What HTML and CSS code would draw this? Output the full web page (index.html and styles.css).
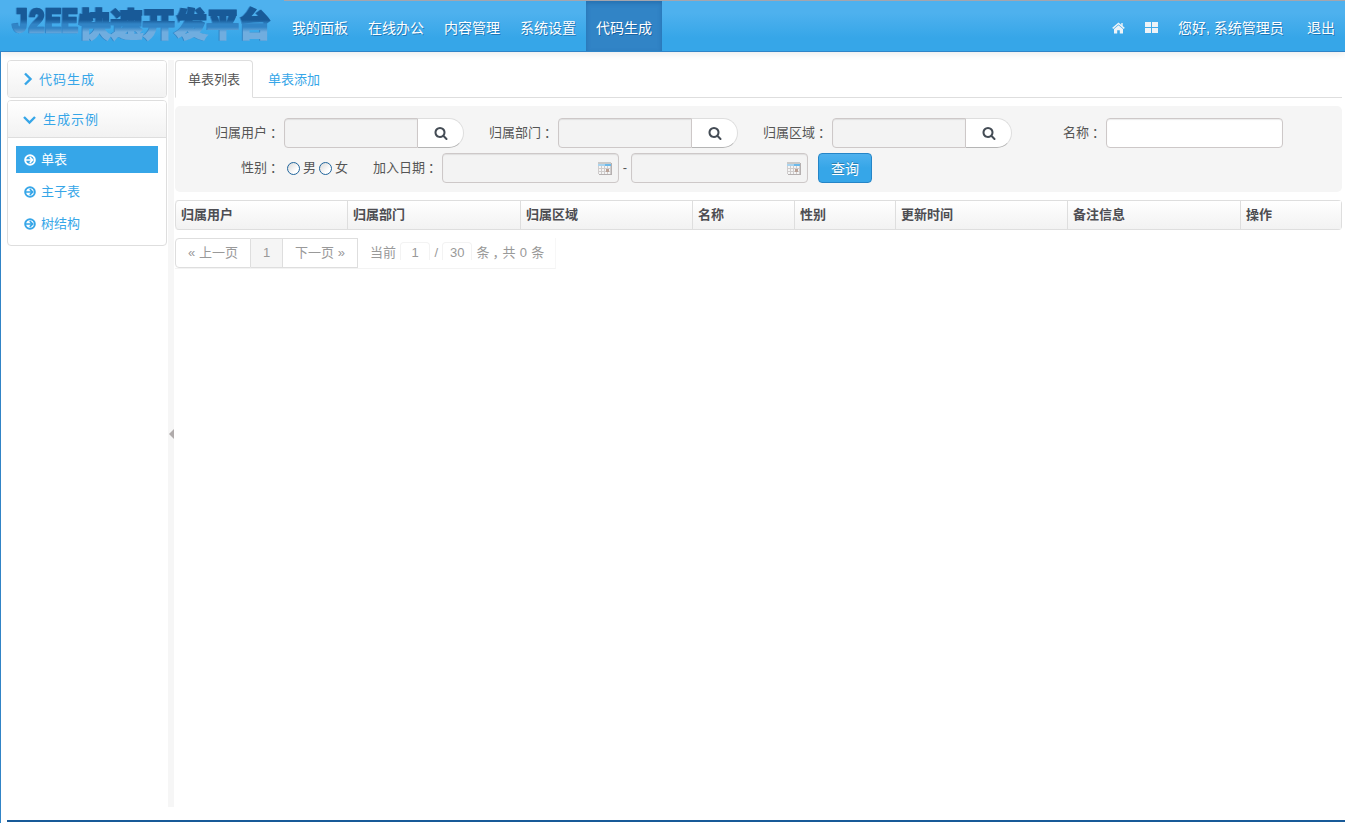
FILE: index.html
```html
<!DOCTYPE html>
<html lang="zh-CN">
<head>
  <meta charset="UTF-8">
  <meta name="viewport" content="width=device-width, initial-scale=1.0">
  <title>J2EE快速开发平台</title>
  <link rel="stylesheet" href="styles.css">
</head>
<body>
  <!-- 图标 -->
  <svg class="sprite" width="0" height="0">
    <symbol id="icon-search" viewBox="0 0 1792 1792">
      <path d="M1216 832q0-185-131.5-316.5t-316.5-131.5-316.5 131.5-131.5 316.5 131.5 316.5 316.5 131.5 316.5-131.5 131.5-316.5zm512 832q0 52-38 90t-90 38q-54 0-90-38l-343-342q-179 124-399 124-143 0-273.5-55.5t-225-150-150-225-55.5-273.5 55.5-273.5 150-225 225-150 273.5-55.5 273.5 55.5 225 150 150 225 55.5 273.5q0 220-124 399l343 343q37 37 37 90z"/>
    </symbol>
    <symbol id="icon-go" viewBox="0 0 12 12">
      <circle cx="6" cy="6" r="4.8" fill="none" stroke="currentColor" stroke-width="2"/>
      <path d="M2 6h6M5.8 3.2 8.6 6 5.8 8.8" fill="none" stroke="currentColor" stroke-width="1.7"/>
    </symbol>
    <symbol id="icon-calendar" viewBox="0 0 14 13">
      <path d="M1 1h13v12H1z" fill="#b5b0b0"/>
      <path d="M0 0h13v12H0z" fill="#f4f4f4"/>
      <path d="M0 0h13v2H0z" fill="#c9c9c9"/>
      <path d="M0 2h13v2H0z" fill="#a9d3ee"/>
      <path d="M7 2h6v2H7z" fill="#6cb9ea"/>
      <path d="M0 6.5h13M0 9.5h13M.5 4v8M3.5 4v8M6.5 4v8M9.5 4v8M12.5 4v8" stroke="#cfcccc" fill="none"/>
      <path d="M8 7h3v3H8z" fill="#b9a196"/>
    </symbol>
  </svg>

  <div class="header">
    <div class="brand">
      <span class="brand-en">J2EE</span><span class="brand-cn">快速开发平台</span>
    </div>
    <ul class="nav">
      <li>我的面板</li>
      <li>在线办公</li>
      <li>内容管理</li>
      <li>系统设置</li>
      <li class="active">代码生成</li>
    </ul>
    <div class="user">
      <svg class="icon-home" width="13" height="12" viewBox="0 0 13 12">
        <path d="M6.5 3.2 11 7v4.5H7.8V8.2H5.2v3.3H2V7z"/>
        <path d="M.7 6.4 6.5 1.5l5.8 4.9M10 1v3" fill="none" stroke="currentColor" stroke-width="1.4"/>
      </svg>
      <svg class="icon-grid" width="13" height="12" viewBox="0 0 13 12">
        <path d="M0 0h6v5H0zM7 0h6v5H7zM0 6h6v5H0zM7 6h6v5H7z"/>
      </svg>
      <span class="hello">您好, 系统管理员</span>
      <span class="logout">退出</span>
    </div>
  </div>

  <div class="wrapper">
    <div class="sidebar">
      <div class="group">
        <div class="group-title">
          <svg width="10" height="14" viewBox="0 0 10 14"><path d="M2 1.5 7.5 7 2 12.5"/></svg>代码生成
        </div>
      </div>
      <div class="group open">
        <div class="group-title">
          <svg width="13" height="10" viewBox="0 0 13 10"><path d="M1 2 6.5 7.5 12 2"/></svg>生成示例
        </div>
        <ul class="menu">
          <li class="active"><svg width="12" height="12"><use href="#icon-go"/></svg>单表</li>
          <li><svg width="12" height="12"><use href="#icon-go"/></svg>主子表</li>
          <li><svg width="12" height="12"><use href="#icon-go"/></svg>树结构</li>
        </ul>
      </div>
    </div>

    <div class="splitter"><i></i></div>

    <div class="main">
      <ul class="tabs">
        <li class="active">单表列表</li>
        <li>单表添加</li>
      </ul>

      <form class="search-form">
        <div class="row">
          <label>归属用户<span class="punct">：</span></label>
          <div class="picker"><input type="text" readonly><button type="button"><svg width="14" height="14"><use href="#icon-search"/></svg></button></div>
          <label>归属部门<span class="punct">：</span></label>
          <div class="picker"><input type="text" readonly><button type="button"><svg width="14" height="14"><use href="#icon-search"/></svg></button></div>
          <label>归属区域<span class="punct">：</span></label>
          <div class="picker"><input type="text" readonly><button type="button"><svg width="14" height="14"><use href="#icon-search"/></svg></button></div>
          <label>名称<span class="punct">：</span></label>
          <input class="text" type="text">
        </div>
        <div class="row">
          <label>性别<span class="punct">：</span></label>
          <div class="radios">
            <input type="radio" name="sex"><span>男</span>
            <input type="radio" name="sex"><span>女</span>
          </div>
          <label>加入日期<span class="punct">：</span></label>
          <div class="date"><svg width="14" height="13"><use href="#icon-calendar"/></svg></div>
          <span class="dash">-</span>
          <div class="date"><svg width="14" height="13"><use href="#icon-calendar"/></svg></div>
          <button class="submit" type="button">查询</button>
        </div>
      </form>

      <table class="list">
        <thead>
          <tr>
            <th class="w172">归属用户</th>
            <th class="w173">归属部门</th>
            <th class="w172">归属区域</th>
            <th class="w102">名称</th>
            <th class="w101">性别</th>
            <th class="w172">更新时间</th>
            <th class="w173">备注信息</th>
            <th class="w101">操作</th>
          </tr>
        </thead>
      </table>

      <div class="pagination">
        <span class="page prev">« 上一页</span>
        <span class="page current">1</span>
        <span class="page next">下一页 »</span>
        <span class="total">当前 <b>1</b> / <b>30</b> 条<span class="punct">，</span>共 0 条</span>
      </div>
    </div>
  </div>

  <div class="footer"></div>
</body>
</html>
```

FILE: styles.css
```css
* {
  box-sizing: border-box;
}
body {
  margin: 0;
  height: 823px;
  overflow: hidden;
  display: flex;
  flex-direction: column;
  background: #fff;
  color: #555;
  font: 13px/20px "Liberation Sans", "Noto Sans CJK SC", sans-serif;
}
ul {
  list-style: none;
  margin: 0;
  padding: 0;
}
svg {
  fill: currentColor;
  flex: none;
}
.sprite {
  position: absolute;
}
/* 全角标点居中 */
.punct {
  padding-left: 3px;
  letter-spacing: -3px;
}

/* 顶部导航 */
.header {
  flex: none;
  height: 52px;
  display: flex;
  background: linear-gradient(#4eb1ee, #4eb1ee 25%, #36a6e8 75%);
  border-bottom: 1px solid #2f84c8;
  box-shadow: 0 1px 8px rgba(0, 0, 0, 0.1);
  color: #fff;
  font-size: 14px;
  text-shadow: 1px 1px 0 rgba(0, 60, 120, 0.45);
}
.brand {
  flex: none;
  width: 284px;
  height: 46px;
  padding-left: 10px;
  display: flex;
  white-space: nowrap;
  text-shadow: none;
  filter: drop-shadow(-1px 0 0 #3184c6);
}
.brand span {
  height: 46px;
  color: transparent;
  background: linear-gradient(#185a98 0, #185a98 20px, #3184c6 24px, #3184c6 27px, #70addf 32px, #70addf 100%);
  -webkit-background-clip: text;
  background-clip: text;
  -webkit-text-stroke: 2px transparent;
}
.brand .brand-en {
  width: 69px;
  padding-left: 2px;
  font: bold 28px/46px "Liberation Mono", monospace;
  letter-spacing: -0.3px;
  transform: scaleY(1.25);
}
.brand .brand-cn {
  width: 196px;
  font: 900 32px/44px "Noto Sans CJK SC", sans-serif;
}
.nav {
  display: flex;
  flex: 1;
  border-top: 1px solid #a5a5ad;
}
.nav li {
  width: 76px;
  position: relative;
  left: -2px;
  text-align: center;
  line-height: 55px;
  height: 50px;
}
.nav .active {
  background: #3184c6;
  box-shadow: inset 0 2px 4px rgba(24, 90, 152, 0.5);
}
.user {
  display: flex;
  align-items: center;
  padding: 4px 10px 0 0;
  border-top: 1px solid #a5a5ad;
  white-space: nowrap;
}
.user svg {
  color: #eef3f7;
}
.icon-grid {
  margin-left: 20px;
}
.hello {
  width: 105px;
  margin-left: 20px;
}
.logout {
  margin-left: 24px;
}

.wrapper {
  flex: 1;
  display: flex;
  padding: 8px 3px 0 6px;
  border-left: 1px solid #3184c6;
}

/* 左侧菜单 */
.sidebar {
  flex: none;
  width: 160px;
}
.group {
  border: 1px solid #dedede;
  border-radius: 4px;
  margin-bottom: 2px;
  background: #fff;
}
.group-title {
  height: 36px;
  padding: 1px 0 0 15px;
  display: flex;
  align-items: center;
  color: #36a6e8;
  letter-spacing: 1px;
  background: linear-gradient(#fff, #f2f2f2);
  border-radius: 3px;
}
.group-title svg {
  margin: -1px 6px 0 0;
  fill: none;
  stroke: currentColor;
  stroke-width: 2.4;
}
.open .group-title {
  height: 37px;
  padding-top: 2px;
  border-bottom: 1px solid #dedede;
  border-radius: 3px 3px 0 0;
}
.open .group-title svg {
  margin-right: 7px;
}
.menu {
  padding: 8px 8px 3px;
}
.menu li {
  display: flex;
  align-items: center;
  height: 27px;
  padding-left: 8px;
  margin-bottom: 5px;
  color: #36a6e8;
}
.menu li svg {
  margin-right: 5px;
}
.menu .active {
  background: #36a6e8;
  color: #fff;
}

/* 分隔条 */
.splitter {
  flex: none;
  width: 6px;
  height: 747px;
  margin: 0 1px;
  display: flex;
  align-items: center;
  background: #f6f6f6;
}
.splitter i {
  margin-left: 1px;
  border: 5px solid transparent;
  border-left: 0;
  border-right-color: #b0abab;
}

.main {
  flex: none;
  width: 1167px;
}
.tabs {
  display: flex;
  height: 38px;
  border-bottom: 1px solid #dedede;
}
.tabs li {
  height: 38px;
  padding: 9px 12px;
  margin-right: 2px;
  border: 1px solid transparent;
  color: #36a6e8;
}
.tabs .active {
  color: #555;
  background: #fff;
  border-color: #dedede #dedede #fff;
  border-radius: 4px 4px 0 0;
}

/* 查询条件 */
.search-form {
  height: 86px;
  margin-top: 8px;
  padding: 12px 0 0 15px;
  border-radius: 5px;
  background: #f5f5f5;
}
.row {
  display: flex;
  height: 30px;
  margin-bottom: 5px;
}
.row label {
  width: 90px;
  margin-right: 4px;
  line-height: 29px;
  text-align: right;
}
input {
  font: inherit;
  outline: 0;
}
.picker {
  display: flex;
}
.picker input,
.text,
.date {
  height: 30px;
  border: 1px solid #cdc8c8;
  border-radius: 4px;
  background: #f3f3f3;
  box-shadow: inset 0 1px 1px rgba(0, 0, 0, 0.08);
}
.picker input {
  width: 134px;
  border-radius: 4px 0 0 4px;
}
.picker button {
  width: 46px;
  height: 30px;
  padding: 0;
  display: flex;
  align-items: center;
  justify-content: center;
  color: #444c55;
  background: #fff;
  border: 1px solid #dedede;
  border-left: 0;
  border-bottom-color: #b5b5b5;
  border-radius: 0 15px 15px 0;
}
.text {
  width: 177px;
  background: #fff;
}
.radios {
  display: flex;
  width: 64px;
  line-height: 29px;
}
.radios input {
  appearance: none;
  width: 13px;
  height: 13px;
  margin: 9px 3px 0 3px;
  border: 1px solid #21659c;
  border-radius: 50%;
  background: linear-gradient(135deg, #d8d8d8, #fff 70%);
}
.radios span {
  width: 13px;
}
.date {
  width: 177px;
  display: flex;
  align-items: center;
  justify-content: flex-end;
  padding-right: 6px;
}
.dash {
  width: 12px;
  line-height: 29px;
  text-align: center;
}
.dash + .date {
  margin-right: 10px;
}
.submit {
  width: 54px;
  height: 30px;
  padding: 0;
  border: 1px solid #2585c7;
  border-radius: 4px;
  background: linear-gradient(#4eb1ee, #36a6e8 50%);
  color: #fff;
  font: 14px/26px "Noto Sans CJK SC", sans-serif;
  text-shadow: 0 -1px 0 rgba(0, 0, 0, 0.25);
}

/* 数据列表 */
.list {
  width: 1167px;
  margin-top: 8px;
  table-layout: fixed;
  border-collapse: separate;
  border-spacing: 0;
  border: 1px solid #dedede;
  border-left: 0;
  border-radius: 4px;
}
.list th {
  height: 28px;
  padding: 0 5px;
  text-align: left;
  line-height: 28px;
  color: #4d4d52;
  background: linear-gradient(#fff, #f2f2f2);
  border-left: 1px solid #dedede;
}
.list th:first-child {
  border-radius: 4px 0 0 4px;
}
.w172 { width: 172px; }
.w173 { width: 173px; }
.w102 { width: 102px; }
.w101 { width: 101px; }

/* 分页 */
.pagination {
  display: flex;
  width: 381px;
  height: 31px;
  margin-top: 8px;
  color: #999;
  line-height: 28px;
  border-bottom: 1px solid #f3f3f3;
  border-right: 1px solid #f7f7f7;
  white-space: nowrap;
}
.page {
  height: 30px;
  text-align: center;
  border: 1px solid #dedede;
  border-left: 0;
}
.prev {
  width: 76px;
  border-left: 1px solid #dedede;
  border-radius: 4px 0 0 4px;
}
.current {
  width: 32px;
  background: #f5f5f5;
}
.next {
  width: 75px;
}
.total {
  display: flex;
  padding-left: 12px;
  line-height: 29px;
  white-space: pre;
  word-spacing: 0.6px;
}
.total b {
  width: 30px;
  height: 18px;
  margin-top: 4px;
  font-weight: normal;
  text-align: center;
  line-height: 19px;
  border: 1px solid #f3f3f3;
  border-bottom: 0;
  border-radius: 4px 4px 0 0;
}

.footer {
  flex: none;
  height: 3px;
  border-left: 1px solid #3184c6;
  background: linear-gradient(#185a98, #185a98) 6px 0 / 100% 2px no-repeat;
}
```
